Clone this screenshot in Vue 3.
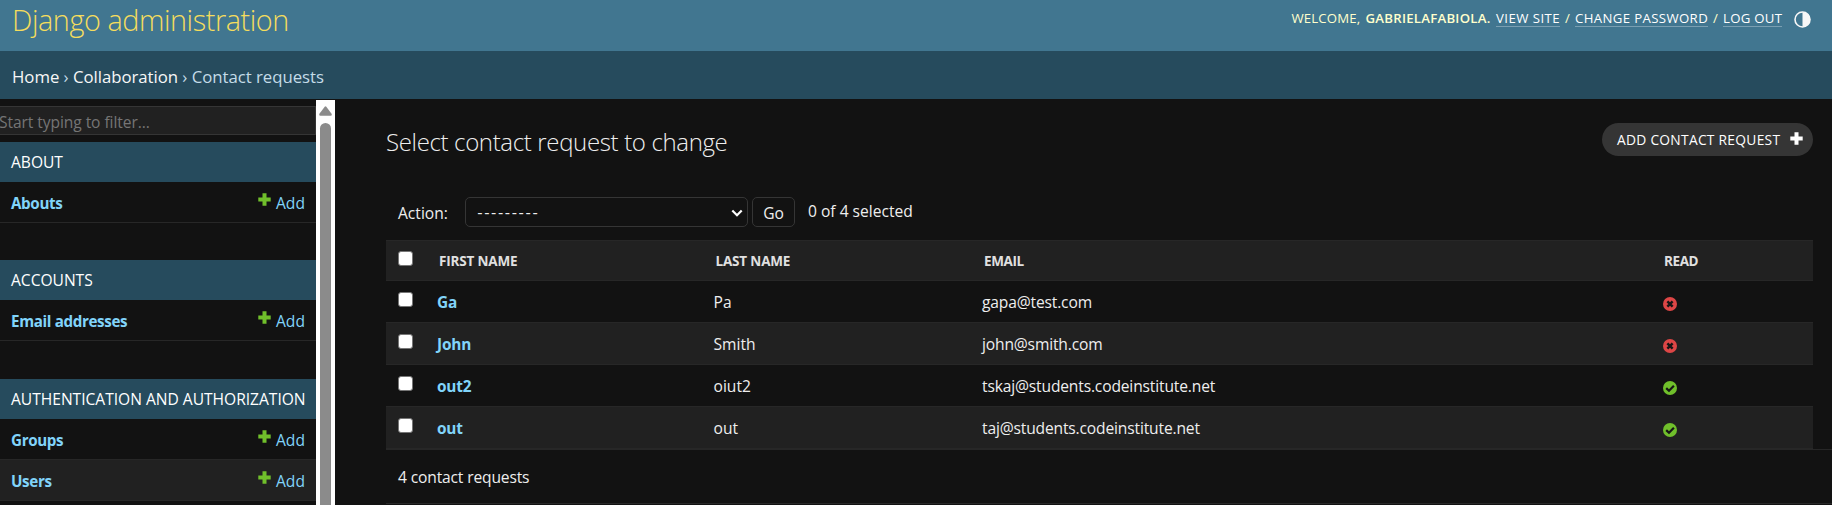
<script setup>
const sections = [
  { name: 'About', models: [{ name: 'Abouts' }] },
  { name: 'Accounts', models: [{ name: 'Email addresses' }] },
  { name: 'Authentication and Authorization', models: [{ name: 'Groups' }, { name: 'Users', alt: true }] },
]
const rows = [
  { first: 'Ga', last: 'Pa', email: 'gapa@test.com', read: false },
  { first: 'John', last: 'Smith', email: 'john@smith.com', read: false },
  { first: 'out2', last: 'oiut2', email: 'tskaj@students.codeinstitute.net', read: true },
  { first: 'out', last: 'out', email: 'taj@students.codeinstitute.net', read: true },
]
</script>

<template>
  <div class="page">
    <header class="header">
      <h1 class="brand">Django administration</h1>
      <div class="user-tools">
        <span class="welcome">WELCOME,</span>
        <strong>GABRIELAFABIOLA.</strong>
        <a class="view">VIEW SITE</a>
        <span class="slash">/</span>
        <a class="pwd">CHANGE PASSWORD</a>
        <span class="slash">/</span>
        <a class="out">LOG OUT</a>
        <svg class="theme" viewBox="0 0 17 17">
          <circle cx="8.5" cy="8.5" r="7.5" fill="none" stroke="#f7f7f7" stroke-width="1.6" />
          <path d="M8.5 .9a7.6 7.6 0 0 1 0 15.2z" fill="#f7f7f7" />
        </svg>
      </div>
    </header>
    <nav class="crumbs"><a>Home</a> › <a>Collaboration</a> › Contact requests</nav>

    <div class="body">
      <aside class="sidebar">
        <div class="filter">Start typing to filter...</div>
        <section v-for="s in sections" :key="s.name" class="app">
          <h2 class="caption">{{ s.name }}</h2>
          <div v-for="m in s.models" :key="m.name" class="model" :class="{ alt: m.alt }">
            <a class="model-name">{{ m.name }}</a>
            <svg class="plus" viewBox="0 0 13 13"><path d="M4.5.3h4v4.2h4.2v4H8.5v4.2h-4V8.5H.3v-4h4.2z" fill="#70bf2b" /></svg>
            <a class="add">Add</a>
          </div>
        </section>
      </aside>
      <div class="scrollbar">
        <svg class="arrow" viewBox="0 0 13 10"><path d="M5.7.7Q6.5-.2 7.3.7l5.3 7.1q.6 1.9-.9 1.9H1.3Q-.2 9.7.4 7.8z" fill="#8b8b8b" /></svg>
        <div class="thumb"></div>
      </div>

      <main class="main">
        <div class="title-row">
          <h2 class="title">Select contact request to change</h2>
          <a class="add-button">
            <span>ADD CONTACT REQUEST</span>
            <svg viewBox="0 0 13 13"><path d="M4.5.3h4v4.2h4.2v4H8.5v4.2h-4V8.5H.3v-4h4.2z" fill="#fff" /></svg>
          </a>
        </div>

        <div class="actions">
          <span class="action-label">Action:</span>
          <div class="select">
            <span>---------</span>
            <svg viewBox="0 0 12 8"><path d="M1.3 1.5 6 6.2l4.7-4.7" fill="none" stroke="#fff" stroke-width="2.2" /></svg>
          </div>
          <button class="go">Go</button>
          <span class="counter">0 of 4 selected</span>
        </div>

        <div class="table">
          <div class="row head">
            <div><i class="check"></i></div>
            <div>FIRST NAME</div>
            <div>LAST NAME</div>
            <div>EMAIL</div>
            <div>READ</div>
          </div>
          <div v-for="(r, i) in rows" :key="r.email" class="row" :class="{ alt: i % 2 }">
            <div><i class="check"></i></div>
            <div><a class="first">{{ r.first }}</a></div>
            <div>{{ r.last }}</div>
            <div class="email">{{ r.email }}</div>
            <div>
              <svg class="status" viewBox="0 0 14 14">
                <circle cx="7" cy="7" r="7" :fill="r.read ? '#70bf2b' : '#dd4646'" />
                <path v-if="r.read" d="M3.2 7.1 6 9.8l4.9-5" class="mark" />
                <path v-else d="M4.4 4.4l5.2 5.2M9.6 4.4 4.4 9.6" class="mark cross" />
              </svg>
            </div>
          </div>
        </div>
        <div class="paginator">4 contact requests</div>
      </main>
    </div>
  </div>
</template>

<style>
body { background: #121212; overflow: hidden; }
</style>

<style scoped>
.page {
  width: 1832px;
  height: 505px;
  overflow: hidden;
  background: #121212;
  color: #eee;
  font: 15.6px/20px "Open Sans", "Noto Sans", sans-serif;
  white-space: nowrap;
}
.page * { box-sizing: border-box; }
svg { display: block; flex: none; }

.header {
  display: flex;
  justify-content: space-between;
  height: 51px;
  padding: 0 21px 0 12px;
  background: #417690;
}
.brand {
  margin: 0;
  font-size: 28.8px;
  font-weight: 300;
  line-height: 40px;
  letter-spacing: -0.43px;
  color: #f5dd5d;
}
.user-tools {
  display: flex;
  height: 38px;
  padding-top: 9px;
  font-size: 13.2px;
  line-height: 18px;
  letter-spacing: 0.35px;
  color: #ffc;
}
.user-tools a { height: 18px; border-bottom: 1px solid #7a9fb2; color: #fff; }
.welcome { width: 74px; letter-spacing: 0.15px; }
.user-tools strong { width: 130.5px; font-weight: 600; letter-spacing: 0.25px; }
.view { width: 64px; letter-spacing: 0.45px; }
.pwd { width: 133px; letter-spacing: 0.37px; }
.out { width: 59px; letter-spacing: 0.27px; }
.slash { width: 15px; text-align: center; }
.theme { width: 17px; height: 17px; margin: 1.5px 0 0 12px; }

.crumbs {
  height: 48px;
  padding: 2px 0 0 12px;
  background: #264b5d;
  font-size: 16.8px;
  line-height: 47px;
  letter-spacing: -0.04px;
  color: #c4dce8;
}
.crumbs a { color: #f7f7f7; }

.body { display: flex; height: 406px; }

.sidebar { width: 316px; padding-top: 7px; }
.filter {
  height: 29px;
  margin-bottom: 7px;
  padding-top: 1px;
  border: 1px solid #353535;
  border-left: 0;
  background: #212121;
  line-height: 29px;
  letter-spacing: -0.08px;
  text-indent: -1px;
  color: #757575;
}
.app { margin-bottom: 37px; }
.app:nth-of-type(2) { margin-bottom: 38px; }
.caption {
  height: 40px;
  margin: 0;
  padding-left: 11px;
  background: #264b5d;
  font-size: 15.6px;
  font-weight: 400;
  line-height: 40px;
  letter-spacing: -0.02px;
  text-transform: uppercase;
  color: #fff;
}
.model {
  display: flex;
  height: 41px;
  padding: 1px 11px 0 11px;
  border-bottom: 1px solid #272727;
  line-height: 40px;
  color: #81d4fa;
}
.model.alt { background: #212121; }
.model-name { flex: 1; font-size: 15.2px; font-weight: 700; letter-spacing: -0.36px; }
.plus { width: 13px; height: 13px; margin: 10px 5px 0 0; }
.add { width: 29px; }

.scrollbar {
  width: 19px;
  margin-top: 1px;
  padding: 6px 3px 0;
  background: #fff;
}
.arrow { width: 13px; height: 10px; }
.thumb {
  width: 11px;
  height: 420px;
  margin: 7px 0 0 1px;
  border-radius: 5.5px;
  background: #8b8b8b;
}

.main { width: 1497px; padding-left: 51px; }
.title-row {
  display: flex;
  justify-content: space-between;
  height: 98px;
  padding: 24px 19px 0 0;
}
.title {
  margin: 0;
  font-size: 24px;
  font-weight: 300;
  line-height: 37px;
  letter-spacing: -0.35px;
}
.add-button {
  display: flex;
  align-items: center;
  justify-content: space-between;
  width: 211px;
  height: 33px;
  padding: 0 10px 0 15px;
  border-radius: 17px;
  background: #353535;
  font-size: 13.8px;
  letter-spacing: 0.27px;
  color: #fff;
}
.add-button span { padding-top: 1px; }
.add-button svg { width: 13px; height: 13px; margin-bottom: 2px; }

.actions { display: flex; height: 43px; padding-left: 12px; }
.action-label { width: 67px; line-height: 32px; }
.select {
  display: flex;
  align-items: center;
  justify-content: space-between;
  width: 283px;
  height: 30px;
  padding: 0 4px 0 11px;
  border: 1px solid #353535;
  border-radius: 5px;
  font-family: Lato, sans-serif;
  letter-spacing: 1.1px;
}
.select svg { width: 12px; height: 8px; margin-top: 2px; }
.go {
  width: 43px;
  height: 30px;
  margin: 0 13px 0 4px;
  padding: 2px 0 0;
  border: 1px solid #353535;
  border-radius: 5px;
  background: #121212;
  color: #eee;
  font: inherit;
}
.counter { line-height: 29px; }

.table { width: 1427px; border-top: 1px solid #272727; }
.row {
  display: grid;
  grid-template-columns: 51px 276.5px 268.5px 681px 150px;
  height: 42px;
  border-bottom: 1px solid #272727;
  line-height: 42px;
}
.row > div { height: 41px; }
.row.alt, .row.head { background: #212121; }
.row.head {
  height: 40px;
  font-size: 13.5px;
  font-weight: 700;
  line-height: 41px;
  color: #e0e0e0;
}
.row.head > div { height: 39px; padding-left: 2px; letter-spacing: -0.17px; }
.row.head > div:first-child { padding: 0; }
.row.head > div:nth-child(n + 4) { letter-spacing: -0.4px; }
.row.head > div:last-child { padding-left: 1px; }
.check {
  display: block;
  width: 15px;
  height: 15px;
  margin: 11px 0 0 12px;
  border: 1px solid #767676;
  border-radius: 3px;
  background: #fff;
}
.head .check { margin-top: 10px; }
.first { font-size: 15.4px; font-weight: 700; letter-spacing: -0.2px; color: #81d4fa; }
.email { letter-spacing: -0.16px; }
.status { width: 14px; height: 14px; margin-top: 16px; }
.mark { fill: none; stroke: #161616; stroke-width: 2.2; }
.cross { stroke-width: 2.5; }

.paginator {
  height: 55px;
  padding: 1px 0 0 12px;
  border-top: 1px solid #272727;
  border-bottom: 1px solid #272727;
  line-height: 53px;
  letter-spacing: -0.15px;
}
</style>
